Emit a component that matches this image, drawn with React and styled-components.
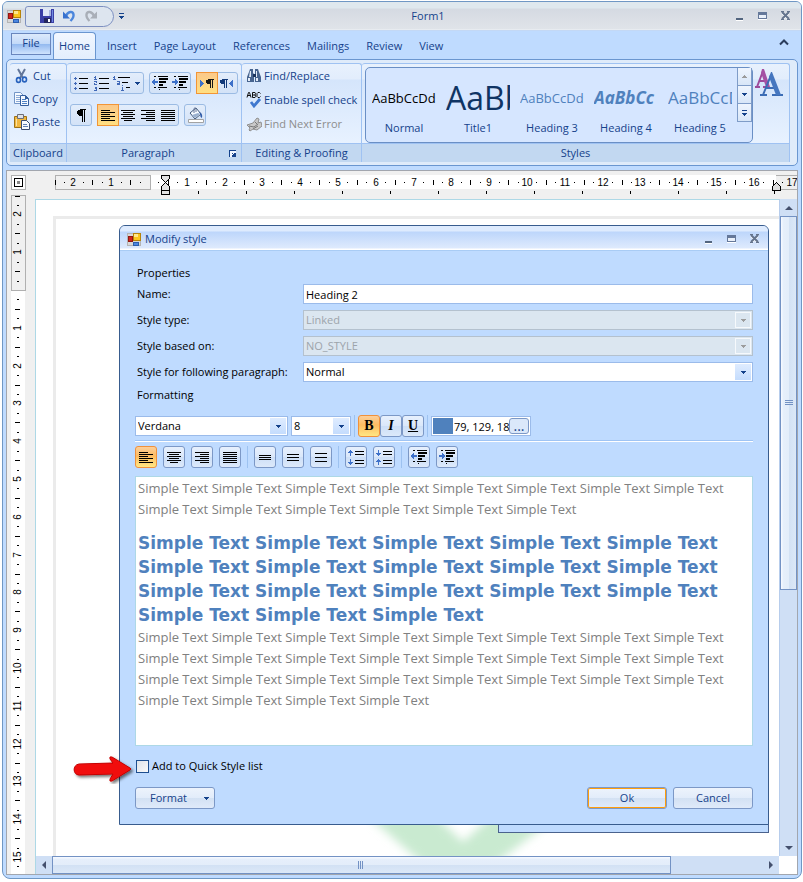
import React from "react";
import styled, { createGlobalStyle, css } from "styled-components";

const Global = createGlobalStyle`
  * { box-sizing: border-box; }
  body { margin: 0; background: #fff; font: 11px/16px "Open Sans", "Noto Sans", sans-serif; color: #000; }
  button, input, select { font: inherit; color: inherit; margin: 0; padding: 0; border: 0; background: none; }
  svg { display: block; flex: none; }
`;

const ink = "#15428b";

/* ---------- window frame ---------- */
const Window = styled.div`
  display: flex;
  flex-direction: column;
  min-height: 878px;
  height: calc(100vh - 4px);
  margin: 1px 1px 3px 2px;
  border: 1px solid #6f97c4;
  border-radius: 6px 6px 8px 8px;
  overflow: hidden;
  background: #bfdbff;
`;
const TitleBar = styled.header`
  display: grid;
  grid-template-columns: auto 1fr auto;
  align-items: center;
  height: 29px;
  padding: 0 7px 0 4px;
  color: ${ink};
  text-align: center;
  background: linear-gradient(#dfe8ee 0, #dfe8ee 6px, #d5dae2 7px, #e0e4e9 27px, #f0f3f7 28px);
  border-bottom: 1px solid #c3d8f5;
`;
const QuickAccess = styled.div`
  display: flex;
  align-items: center;
`;
const QuickPill = styled.div`
  display: flex;
  align-items: center;
  gap: 8px;
  width: 89px;
  height: 21px;
  margin: 0 5px 0 4px;
  padding-left: 14px;
  border: 1px solid #7c8fc0;
  border-radius: 3px 11px 11px 3px;
  background: #dde5ef;
`;
const PlainButton = styled.button`
  display: grid;
  place-items: center;
`;
const WindowButtons = styled.div`
  display: flex;
  justify-content: flex-end;
  align-items: center;
  gap: 7px;
  button { width: 16px; height: 16px; display: grid; place-items: center; }
`;

/* ---------- ribbon ---------- */
const TabRow = styled.nav`
  display: flex;
  height: 28px;
  padding: 1px 6px 0 8px;
  color: ${ink};
`;
const FileTab = styled.button`
  width: 40px;
  height: 22px;
  margin: 1px 2px 0 0;
  padding-bottom: 2px;
  border: 1px solid #6a86bd;
  background: linear-gradient(#dce9fb, #c2d9f8 50%, #93b9ef 51%, #cfe3fd);
`;
const Tab = styled.button`
  height: 27px;
  padding: 0 8px;
  margin-right: -1px;
  border: 1px solid transparent;
  border-bottom: 0;
  border-radius: 4px 4px 0 0;
  ${(p) =>
    p.$active &&
    css`
      width: 43px;
      padding: 0;
      margin-right: 2px;
      border-color: #6a96d0;
      background: linear-gradient(#f2f7ff, #e3eefd);
    `}
`;
const Collapse = styled(PlainButton)`
  width: 16px;
  height: 18px;
  margin: 1px 3px 0 auto;
`;
const Ribbon = styled.section`
  display: grid;
  grid-template-columns: 57px 175px 120px 1fr;
  height: 107px;
  margin: 0 3px;
  padding: 3px 7px 3px 3px;
  border: 1px solid #6a96d0;
  border-radius: 5px;
  background: #dfebfa;
  color: ${ink};
`;
const Group = styled.div`
  display: flex;
  flex-direction: column;
  min-width: 0;
  border: solid #9fc2f2;
  border-width: 1px 1px 0 0;
  border-radius: 3px 3px 0 0;
  background: linear-gradient(#e8f1fd 0, #e2edfc 15px, #d5e5fb 16px, #e8f2ff 80px);
`;
const GroupBody = styled.div`
  flex: 1;
  min-height: 0;
  padding: ${(p) => p.$pad || "4px 3px"};
  display: flex;
  ${(p) => p.$column && "flex-direction: column;"}
  gap: ${(p) => p.$gap || 0}px;
`;
const GroupLabel = styled.div`
  display: flex;
  justify-content: center;
  align-items: center;
  height: 19px;
  padding-right: ${(p) => (p.$launcher ? 5 : 0)}px;
  border-top: 1px solid #9fc2f2;
  background: #c2d8f1;
  white-space: nowrap;
  > span { flex: 1; text-align: center; }
`;
const Command = styled.button`
  display: flex;
  align-items: center;
  gap: ${(p) => p.$gap || 2}px;
  height: ${(p) => p.$h || 23}px;
  white-space: nowrap;
  &:disabled { color: #8d8d8d; }
`;
const Strip = styled.div`
  display: flex;
  height: 22px;
  border: 1px solid #9bbbe3;
  border-radius: 3px;
  background: linear-gradient(#e3edfb, #d3e2f7);
`;
const StripRow = styled.div`
  display: flex;
  gap: 5px;
`;
const StripButton = styled.button`
  display: grid;
  place-items: center;
  width: ${(p) => p.$w || 20}px;
  height: 20px;
  ${(p) =>
    p.$on &&
    css`
      outline: 1px solid #f29536;
      background: linear-gradient(#fbc98a, #ffdf82);
    `}
`;
const Gallery = styled.div`
  display: flex;
  height: 76px;
  flex: 0 0 388px;
  padding-left: 1px;
  border: 1px solid #6a8fc5;
  border-radius: 5px;
  background: #d6e6ff;
`;
const GalleryItem = styled.button`
  display: flex;
  flex-direction: column;
  width: 74px;
  height: 74px;
  align-items: center;
`;
const Sample = styled.span`
  width: 64px;
  height: 52px;
  padding-top: 6px;
  overflow: hidden;
  white-space: nowrap;
  text-align: left;
  line-height: 48px;
  font-size: ${(p) => p.$size}px;
  color: ${(p) => p.$color};
  font-weight: ${(p) => p.$weight || 400};
  font-style: ${(p) => (p.$italic ? "italic" : "normal")};
`;
const Spinner = styled.div`
  display: flex;
  flex-direction: column;
  button {
    display: grid;
    place-items: center;
    width: 15px;
    height: 18px;
    border: 1px solid #7f9cc8;
    border-top: 0;
    background: linear-gradient(#eff5fe, #d8e6f8);
  }
`;

/* ---------- work area ---------- */
const Work = styled.main`
  flex: 1;
  min-height: 0;
  display: grid;
  grid-template-columns: 28px minmax(0, 1fr) 18px;
  grid-template-rows: 28px minmax(0, 1fr) 18px;
  margin: 4px 3px 3px;
  border: 1px solid #a2a6ae;
  background: #f0f0f0;
`;
const HRuler = styled.div`
  grid-column: 2 / 4;
  overflow: hidden;
`;
const LeftRuler = styled.div`
  grid-row: 1 / 4;
  display: flex;
  flex-direction: column;
  gap: 5px;
  min-height: 0;
  overflow: hidden;
  padding: 4px 0 1px 4px;
`;
const Corner = styled.div`
  flex: none;
  display: grid;
  place-items: center;
  width: 15px;
  height: 15px;
  border: 1px solid #b0b0b0;
  background: #fff;
`;
const Doc = styled.div`
  position: relative;
  overflow: hidden;
  background: #fff;
  border: solid #add8e6;
  border-width: 1px 0 0 1px;
`;
const Sheet = styled.div`
  position: absolute;
  inset: 16px 0 0 17px;
  border: solid #ebebeb;
  border-width: 3px 0 0 3px;
  background: #fff;
`;
const Watermark = styled.svg`
  position: absolute;
  left: 330px;
  top: 560px;
`;
const BackWindow = styled.div`
  position: absolute;
  left: 462px;
  right: 10px;
  top: 600px;
  height: 33px;
  border: 1px solid #4a628d;
  background: #bfdbff;
`;
const Pointer = styled.svg`
  position: absolute;
  left: 35px;
  top: 555px;
`;
const VBar = styled.div`
  display: flex;
  flex-direction: column;
  align-items: center;
  background: #cfdff5;
  border-left: 1px solid #b7cdec;
`;
const HBar = styled.div`
  display: flex;
  align-items: center;
  background: #cfdff5;
  border-left: 1px solid #add8e6;
`;
const ScrollArrow = styled.button`
  display: grid;
  place-items: center;
  width: 16px;
  height: 17px;
  flex: none;
`;
const Track = styled.div`
  flex: 1;
  align-self: stretch;
  display: flex;
  flex-direction: ${(p) => (p.$vertical ? "column" : "row")};
`;
const Thumb = styled.div`
  display: grid;
  place-items: center;
  border: 1px solid #7392c4;
  ${(p) =>
    p.$vertical
      ? "height: 60%; background: linear-gradient(90deg, #f4f8ff 1px, #e6effb 2px, #e3edfa 50%, #d2e1f4 51%, #dce8f7);"
      : "width: 87%; background: linear-gradient(#f4f8ff 1px, #e6effb 2px, #e3edfa 50%, #d2e1f4 51%, #dce8f7);"}
`;
const White = styled.div`
  background: #fff;
`;

/* ---------- dialog ---------- */
const Dialog = styled.section`
  position: absolute;
  left: 83px;
  right: 10px;
  top: 25px;
  border: 1px solid #385c8e;
  border-radius: 6px 6px 0 0;
  overflow: hidden;
  background: #bfdbff;
`;
const DialogTitle = styled.header`
  display: flex;
  align-items: center;
  gap: 4px;
  height: 25px;
  padding: 2px 5px 0 7px;
  color: ${ink};
  border-bottom: 1px solid #a9ccf5;
  background: linear-gradient(#deebfe 0, #deebfe 5px, #bdd6fb 6px, #deeafd 22px, #fff 23px);
  > div { margin-left: auto; }
`;
const DialogBody = styled.form`
  display: flex;
  flex-direction: column;
  padding: 14px 15px 15px;
`;
const Heading = styled.div`
  height: 18px;
  padding-left: 2px;
  margin-bottom: ${(p) => p.$after}px;
`;
const Fields = styled.div`
  display: grid;
  grid-template-columns: 168px 1fr;
  row-gap: 6px;
  margin-bottom: 5px;
  label { padding-left: 2px; line-height: 20px; white-space: nowrap; }
`;
const fieldBox = css`
  width: 100%;
  height: 20px;
  padding: 0 2px;
  border: 1px solid #9bbbea;
  border-radius: 0;
  background: #fff;
  outline: 0;
`;
const TextInput = styled.input`
  ${fieldBox}
`;
const SelectWrap = styled.div`
  position: relative;
  width: ${(p) => (p.$w ? p.$w + "px" : "auto")};
  select {
    ${fieldBox}
    appearance: none;
  }
  select:disabled { background: #dbe6f0; border-color: #b4c1ce; color: #9da4ab; opacity: 1; }
`;
const SelectArrow = styled.span`
  position: absolute;
  right: 2px;
  top: 2px;
  display: grid;
  place-items: center;
  width: 16px;
  height: 16px;
  pointer-events: none;
  background: ${(p) => (p.$off ? "#dbe6f0" : "linear-gradient(#dfecff, #c4dcfd)")};
  border: ${(p) => (p.$off ? "1px solid #f6f9fc" : "0")};
`;
const Tools = styled.div`
  display: flex;
  align-items: center;
  gap: ${(p) => p.$gap}px;
  height: 22px;
`;
const Rule = styled.hr`
  align-self: stretch;
  margin: 3px 0 4px;
  border: 0;
  height: 2px;
  background: linear-gradient(#9fc4f4 50%, #fff 50%);
`;
const Divider = styled.i`
  width: 1px;
  height: 22px;
  background: #9dc2f0;
`;
const ToolButton = styled.button`
  display: grid;
  place-items: center;
  width: 22px;
  height: 22px;
  border: 1px solid ${(p) => (p.$on ? "#f0913c" : "#7c98c6")};
  border-radius: 3px;
  background: ${(p) =>
    p.$on ? "linear-gradient(#fccf9a, #fdbc62 45%, #ffe783)" : "linear-gradient(#e7f0fd, #dbe8fa 48%, #cddff7 50%, #dce9fa)"};
`;
const Letter = styled.span`
  font: 700 14px/18px "Liberation Serif", serif;
  font-style: ${(p) => (p.$italic ? "italic" : "normal")};
  text-decoration: ${(p) => (p.$under ? "underline" : "none")};
`;
const Joined = styled.div`
  display: flex;
`;
const ColorField = styled.div`
  display: flex;
  align-items: center;
  width: 100px;
  height: 20px;
  padding: 0 1px;
  border: 1px solid #9bbbea;
  background: #fff;
  input { flex: 1; min-width: 0; height: 18px; padding-left: 1px; outline: 0; }
`;
const Swatch = styled.span`
  flex: none;
  width: 20px;
  height: 16px;
  background: #4f81bd;
`;
const More = styled.button`
  flex: none;
  width: 20px;
  height: 16px;
  line-height: 10px;
  font-size: 14px;
  border: 1px solid #7c98c6;
  border-radius: 3px;
  color: ${ink};
  background: #dbe8fa;
`;
const Preview = styled.div`
  height: 270px;
  margin-top: 8px;
  padding: 1px 2px;
  overflow: hidden;
  border: 1px solid #add8e6;
  background: #fff;
`;
const Para = styled.p`
  margin: 0;
  font: 13px/21px "Open Sans", sans-serif;
  color: #808080;
`;
const BigPara = styled.p`
  margin: 11px 0 0;
  font: 700 17px/24px "DejaVu Sans", sans-serif;
  color: #4f81bd;
`;
const Check = styled.label`
  display: flex;
  align-items: center;
  gap: 3px;
  height: 18px;
  margin: 11px 0 12px 1px;
  input {
    appearance: none;
    width: 13px;
    height: 13px;
    border: 1px solid #1d4e8f;
    background: linear-gradient(135deg, #dfe3ea, #fafafa);
  }
`;
const Footer = styled.div`
  display: flex;
  gap: 6px;
`;
const PushButton = styled.button`
  display: flex;
  align-items: center;
  justify-content: center;
  gap: 17px;
  width: 80px;
  height: 22px;
  margin-right: ${(p) => (p.$left ? "auto" : 0)};
  padding-left: ${(p) => (p.$left ? 9 : 0)}px;
  color: ${ink};
  border: 1px solid #7c98c6;
  border-radius: 3px;
  box-shadow: ${(p) => (p.$default ? "inset 0 0 0 1px #ff9d0a" : "none")};
  background: linear-gradient(#edf3fc, #e2ecfa 50%, #d3e1f3 51%, #dfeafa);
`;

/* ---------- drawings ---------- */
const Svg = ({ w = 16, h = 16, crisp = true, children }) => (
  <svg width={w} height={h} viewBox={`0 0 ${w} ${h}`} fill="none" shapeRendering={crisp ? "crispEdges" : "auto"} aria-hidden="true">
    {children}
  </svg>
);
const AppIcon = () => (
  <Svg w={14} h={14}>
    <path d="M0 1h13v12H0z" fill="#d8d8d8" stroke="#b4b4b4" />
    <path d="M1 4h4v5H1z" fill="#d0241b" stroke="#941510" />
    <path d="M6 1h7v7H6z" fill="#fbc51d" stroke="#b78309" />
    <path d="M7 2h4v3H7z" fill="#ffe88b" />
    <path d="M6 10h5v3H6z" fill="#4a86e0" stroke="#2c5dad" />
  </Svg>
);
const SaveIcon = () => (
  <Svg w={14} h={14}>
    <path d="M0 0h14v14H0z" fill="#3a3fa6" />
    <path d="M3 0h8v7H3z" fill="#dfe7f7" />
    <path d="M9 1h2v6H9z" fill="#a7b6df" />
    <path d="M4 9h7v5H4z" fill="#23265e" />
    <path d="M8 10h2v3H8z" fill="#fff" />
    <path d="M12 1h1v12h-1z" fill="#6f8be0" />
  </Svg>
);
const UndoIcon = ({ redo }) => (
  <Svg w={14} h={14} crisp={false}>
    <g transform={redo ? "translate(14 0) scale(-1 1)" : undefined}>
      <path d="M4 7C6 2 11 2 11.500 5.500c.4 2.500-1 4.500-3 6.500" stroke={redo ? "#a9afb8" : "#4b86dc"} strokeWidth="2.400" />
      <path d="M1 2.500v7h7z" fill={redo ? "#a9afb8" : "#3670ce"} />
    </g>
  </Svg>
);
const Down = ({ color = ink, bar, up }) => (
  <Svg w={5} h={bar ? 6 : 3}>
    {bar && <path d="M0 0h5v1H0z" fill={color} />}
    <path d={up ? "M2 0h1v1h1v1h1v1H0V2h1V1h1z" : bar ? "M0 3h5v1H4v1H3v1H2V5H1V4H0z" : "M0 0h5v1H4v1H3v1H2V2H1V1H0z"} fill={color} />
  </Svg>
);
const ScrollTri = ({ dir }) => (
  <Svg w={8} h={8} crisp={false}>
    <path d={{ up: "M0 6l4-4 4 4z", down: "M0 2h8L4 6z", left: "M6 0v8L2 4z", right: "M2 0l4 4-4 4z" }[dir]} fill="#44506d" />
  </Svg>
);
const MinIcon = () => (
  <Svg w={12} h={12}>
    <path d="M2 8h7v2H2z" fill="#53657f" /><path d="M2 10h7v1H2z" fill="#fff" />
  </Svg>
);
const MaxIcon = () => (
  <Svg w={12} h={12}>
    <path d="M1 2h9v7H1z" fill="#65789a" /><path d="M2 5h7v3H2z" fill="#eaf0fa" /><path d="M1 9h9v1H1z" fill="#fff" />
  </Svg>
);
const CloseIcon = () => (
  <Svg w={12} h={12} crisp={false}>
    <path d="M2 3l7 7M9 3l-7 7" stroke="#fff" strokeWidth="2" /><path d="M2 2l7 7M9 2L2 9" stroke="#65748d" strokeWidth="2" />
    <path d="M1 1.500h3M7 1.500h3M1 9.500h3M7 9.500h3" stroke="#65748d" />
  </Svg>
);
const Lines = ({ rows, w = 14, step = 2 }) => (
  <Svg w={w} h={(rows.length - 1) * step + 1}>
    {rows.map(([x, len], i) => <path key={i} d={`M${x} ${i * step}h${len}v1h-${len}z`} fill="#000" />)}
  </Svg>
);
const ALIGN = {
  left: [[0, 9], [0, 14], [0, 9], [0, 14], [0, 9], [0, 14]],
  center: [[0, 14], [2, 10], [0, 14], [2, 10], [0, 14], [3, 8]],
  right: [[0, 14], [5, 9], [0, 14], [5, 9], [0, 14], [5, 9]],
  full: [[0, 14], [0, 14], [0, 14], [0, 14], [0, 14], [0, 14]],
};
const BulletIcon = () => (
  <Svg w={14} h={13}>
    {[0, 5, 10].map((y) => (
      <g key={y}><path d={`M0 ${y + 1}h3v1H0zM1 ${y}h1v3H1z`} fill="#4169b8" /><path d={`M5 ${y + 1}h9v1H5z`} fill="#000" /></g>
    ))}
  </Svg>
);
const NumberIcon = () => (
  <Svg w={15} h={15}>
    <path d="M1 0h1v4H1zM0 3h3v1H0zM0 1h1v1H0zM0 5h3v2H1v1h2v1H0V7h2V6H0zM0 11h3v4H0v-1h2v-1H1v-1h1z" fill="#4169b8" />
    <path d="M5 2h10v1H5zM5 7h10v1H5zM5 12h10v1H5z" fill="#000" />
  </Svg>
);
const MultiIcon = () => (
  <Svg w={17} h={15}>
    <path d="M1 0h1v4H1zM0 3h3v1H0zM0 1h1v1H0zM4 5h3v4H4V7h2V6H4zM9 9h1v1H9zM9 11h1v4H9zM8 14h3v1H8z" fill="#4169b8" />
    <path d="M5 1h12v1H5zM9 6h6v1H9zM13 11h4v1h-4z" fill="#000" />
  </Svg>
);
const IndentIcon = ({ more }) => (
  <Svg w={16} h={14}>
    <path d="M2 0h2v1H2zM6 0h10v1H6zM7 2h9v2H7zM7 5h7v2H7zM7 8h4v2H7zM2 11h2v1H2zM6 11h9v1H6zM7 13h1v1H7z" fill="#000" />
    <path d={more ? "M0 5h3V3h1v1h1v1h1v2H5v1H4v1H3V7H0z" : "M6 5H3V3H2v1H1v1H0v2h1v1h1v1h1V7h3z"} fill="#3d70c9" />
  </Svg>
);
const Pilcrow = () => (
  <Svg w={9} h={13}>
    <path d="M3 0h6v1H8v12H7V1H6v12H5V7H2V6H1V5H0V2h1V1h2z" fill="#000" />
  </Svg>
);
const DirIcon = ({ rtl }) => (
  <Svg w={14} h={9}>
    <path d={rtl ? "M13 1v7h-1V7h-1V6h-1V5H9V4h1V3h1V2h1V1z" : "M0 1v7h1V7h1V6h1V5h1V4H3V3H2V2H1V1z"} fill="#3d70c9" />
    <path transform={rtl ? undefined : "translate(6 0)"} d="M2 0h6v1H7v8H6V1H5v8H4V5H1V4H0V1h2z" fill={rtl ? "#123a7a" : "#161616"} />
  </Svg>
);
const BucketIcon = () => (
  <Svg w={17} h={17} crisp={false}>
    <path d="M3 6l6-5 5 6-6 5z" fill="#f7fbff" stroke="#405878" /><path d="M7 6V1.500Q8 0 9 1.500V5" stroke="#66779a" />
    <path d="M12 5q4 1 3 6-2-1-2-4z" fill="#315ca8" /><path d="M5 8l6-2 2 1-5 4z" fill="#9bb1cf" />
    <path d="M1.500 12.500h15v3h-15z" fill="#fff" stroke="#a3a3a3" />
  </Svg>
);
const CutIcon = () => (
  <Svg crisp={false}>
    <path d="M4 1l5 9M11 1L6 10" stroke="#63779a" strokeWidth="2" /><ellipse cx="4.500" cy="12" rx="2" ry="2.400" stroke="#2862bd" strokeWidth="1.600" /><ellipse cx="10.500" cy="11.500" rx="2" ry="2.400" stroke="#2862bd" strokeWidth="1.600" />
  </Svg>
);
const CopyIcon = () => (
  <Svg crisp={false}>
    <path d="M.5 1.500h6l3 3v8h-9z" fill="#f5f9ff" stroke="#7295c7" /><path d="M2 4.500h4M2 6.500h4M2 8.500h4M2 10.500h4" stroke="#8ba9d5" />
    <path d="M6.500 4.500h5l3 3v7h-8z" fill="#f5f9ff" stroke="#355f9e" /><path d="M8 8.500h4M8 10.500h5M8 12.500h5" stroke="#4d80c4" />
    <path d="M11 4v4h4z" fill="#355f9e" />
  </Svg>
);
const PasteIcon = () => (
  <Svg crisp={false}>
    <path d="M.5 2.500h12v11H.5z" fill="#f1b73f" stroke="#9c7117" /><path d="M3.500.5h6v4h-6z" fill="#dfe2e8" stroke="#6c6f78" />
    <path d="M2.500 5v7" stroke="#fbe3a0" /><path d="M7.500 6.500h5l3 3v6h-8z" fill="#f7fbff" stroke="#3b4d70" /><path d="M9 10.500h4M9 12.500h5" stroke="#6280b0" />
  </Svg>
);
const FindIcon = () => (
  <Svg crisp={false}>
    <path d="M4 1h3v4l1 1v8H1V9l2-5zM9 1h3l1 3 2 5v5H9z" fill="#47648f" /><path d="M4 3h1v6H3zM10 3h1v6h-1zM2 10h2v3H2zM10 10h2v3h-2z" fill="#e5edf8" /><path d="M7 6h3v3H7z" fill="#1b345c" />
  </Svg>
);
const SpellIcon = () => (
  <Svg crisp={false}>
    <path d="M1 5.500l1.500-5h1l1.500 5M1.500 3.500h3M6.500.5v5h2.500l.8-1.200-.8-1.300h-2M6.500.5H9l.5 1-.5 1.500M14.500 1.500l-1-1h-1.500l-1 1v3l1 1h1.500l1-1" stroke="#111" />
    <path d="M5 10l3 4 6-7" stroke="#3f78cf" strokeWidth="2.800" />
  </Svg>
);
const NextErrorIcon = () => (
  <Svg crisp={false}>
    <path d="M1 9l6-2 4-5 2 1-1 4 3-1 1 4-5 4-4-1-3 2-1-1 1-2z" fill="#c9c9c9" stroke="#8f8f8f" /><path d="M3 10l5 1 4-3M7 13l5-3M9 6l2 2" stroke="#777" />
  </Svg>
);
const ChangeStyles = () => (
  <Svg w={30} h={30} crisp={false}>
    <path d="M1 20h5M9 20h5M3 20L9 4M5 14h7" stroke="#9c4a9b" strokeWidth="2" />
    <path d="M8 2h2l6 18h-4L7 6z" fill="#a552a4" />
    <path d="M6 28h7M18 28h11M9 28L17 8M12 21h10" stroke="#3b6cb5" strokeWidth="2" />
    <path d="M17 5h1l9 23h-5L15 10z" fill="#4576bf" />
  </Svg>
);
const SpacingIcon = ({ inward }) => (
  <Svg w={16} h={15}>
    <path d="M7 1h9v1H7zM7 4h9v1H7zM7 10h9v1H7zM7 13h9v1H7z" fill="#000" />
    <path d={inward ? "M2 0h1v3h2v1H4v1H3v1H2V5H1V4H0V3h2zM2 9h1v1h1v1h1v1H3v3H2v-3H0v-1h1v-1h1z" : "M2 0h1v1h1v1h1v1H3v3H2V3H0V2h1V1h1zM2 9h1v3h2v1H4v1H3v1H2v-1H1v-1H0v-1h2z"} fill="#3d70c9" />
  </Svg>
);
const LauncherIcon = () => (
  <Svg w={7} h={7}>
    <path d="M0 0h7v1H1v6H0z" fill={ink} /><path d="M1 1h6v6H1z" fill="#f2f7ff" /><path d="M3 3h1v1h1V3h1v3H3V5h1V4H3zM6 3h1v4H3V6h3z" fill={ink} />
  </Svg>
);

/* Rulers count centimetres from the margin, one unit every 37.8 px. */
const UNIT = 37.8;
function marks(origin, from, to) {
  const out = [];
  for (let q = from * 4; q <= to * 4; q++) {
    if (q === 0) continue;
    out.push({ p: Math.round(origin + (q * UNIT) / 4), n: q % 4 === 0 ? Math.abs(q / 4) : null, half: q % 2 === 0 });
  }
  return out;
}
const HorizontalScale = () => (
  <svg width="768" height="28" shapeRendering="crispEdges" fontFamily="Liberation Sans, sans-serif" fontSize="10">
    <path d="M20 4h748v14H20z" fill="#fff" />
    <path d="M20.500 4.500h95v14h-95zM741 4.500h30v14h-30" fill="#f0f0f0" stroke="#b0b0b0" />
    {marks(114, -2.5, 17).map(({ p, n, half }) =>
      n ? <text key={p} x={p} y="15" textAnchor="middle">{n}</text>
        : <path key={p} d={half ? `M${p} 9h1v5h-1z` : `M${p} 11h1v1h-1z`} />
    )}
    {Array.from({ length: 13 }, (_, i) => <path key={i} d={`M${163 + i * 48} 20h1v3h-1z`} />)}
    <path d="M126.500 4.500h8v3l-4 4 4 4v8h-8v-8l4-4-4-4z" fill="#e3e3e3" stroke="#000" />
    <path d="M127 19.500h7" stroke="#000" />
    <path d="M737.500 19.500v-4l4-4 4 4v4z" fill="#ddd" stroke="#000" />
  </svg>
);
const VerticalScale = () => (
  <svg width="15" height="700" shapeRendering="crispEdges" fontFamily="Liberation Sans, sans-serif" fontSize="10">
    <path d="M0 0h14v700H0z" fill="#fff" />
    <path d="M.5.500h14v95H.5z" fill="#f0f0f0" stroke="#b0b0b0" />
    {marks(95, -2.5, 15.25).map(({ p, n, half }) =>
      n ? <text key={p} transform={`translate(10 ${p}) rotate(-90)`} textAnchor="middle">{n}</text>
        : <path key={p} d={half ? `M4 ${p}h5v1H4z` : `M6 ${p}h2v1H6z`} />
    )}
  </svg>
);

/* ---------- pieces ---------- */
const Caption = () => (
  <WindowButtons>
    <button type="button" aria-label="Minimize"><MinIcon /></button>
    <button type="button" aria-label="Maximize"><MaxIcon /></button>
    <button type="button" aria-label="Close"><CloseIcon /></button>
  </WindowButtons>
);
const Select = ({ id, value, disabled, w, label }) => (
  <SelectWrap $w={w}>
    <select id={id} disabled={disabled} aria-label={label}><option>{value}</option></select>
    <SelectArrow $off={disabled}><Down color={disabled ? "#9c9c9c" : ink} /></SelectArrow>
  </SelectWrap>
);
const repeat = (n) => Array(n).fill("Simple Text").join(" ");
const STYLES = [
  { name: "Normal", text: "AaBbCcDd", size: 13, color: "#000" },
  { name: "Title1", text: "AaBb", size: 32, color: "#0f3464" },
  { name: "Heading 3", text: "AaBbCcDd", size: 13, color: "#4f81bd" },
  { name: "Heading 4", text: "AaBbCc", size: 17, color: "#4f81bd", weight: 700, italic: true },
  { name: "Heading 5", text: "AaBbCcD", size: 17, color: "#4f81bd" },
];

export default function App() {
  return (
    <>
      <Global />
      <Window>
        <TitleBar>
          <QuickAccess>
            <AppIcon />
            <QuickPill>
              <PlainButton aria-label="Save"><SaveIcon /></PlainButton>
              <PlainButton aria-label="Undo"><UndoIcon /></PlainButton>
              <PlainButton aria-label="Redo"><UndoIcon redo /></PlainButton>
            </QuickPill>
            <PlainButton aria-label="Customize"><Down bar /></PlainButton>
          </QuickAccess>
          <span>Form1</span>
          <Caption />
        </TitleBar>

        <TabRow>
          <FileTab>File</FileTab>
          <Tab $active>Home</Tab>
          {["Insert", "Page Layout", "References", "Mailings", "Review", "View"].map((t) => <Tab key={t}>{t}</Tab>)}
          <Collapse aria-label="Collapse ribbon">
            <Svg w={10} h={7} crisp={false}><path d="M1 5.500l4-4 4 4" stroke="#2b3d5c" strokeWidth="2" /></Svg>
          </Collapse>
        </TabRow>

        <Ribbon>
          <Group>
            <GroupBody $column $pad="0 4px">
              <Command $gap={3}><CutIcon />Cut</Command>
              <Command><CopyIcon />Copy</Command>
              <Command><PasteIcon />Paste</Command>
            </GroupBody>
            <GroupLabel>Clipboard</GroupLabel>
          </Group>
          <Group>
            <GroupBody $column $pad="8px 3px 0" $gap={10}>
              <StripRow>
                <Strip>
                  <StripButton aria-label="Bullets"><BulletIcon /></StripButton>
                  <StripButton aria-label="Numbering"><NumberIcon /></StripButton>
                  <StripButton aria-label="Multilevel list"><MultiIcon /></StripButton>
                  <StripButton $w={12} aria-label="List options"><Down /></StripButton>
                </Strip>
                <Strip>
                  <StripButton aria-label="Decrease indent"><IndentIcon /></StripButton>
                  <StripButton aria-label="Increase indent"><IndentIcon more /></StripButton>
                </Strip>
                <Strip>
                  <StripButton $on aria-label="Left to right"><DirIcon /></StripButton>
                  <StripButton aria-label="Right to left"><DirIcon rtl /></StripButton>
                </Strip>
              </StripRow>
              <StripRow>
                <Strip><StripButton aria-label="Show marks"><Pilcrow /></StripButton></Strip>
                <Strip>
                  {Object.keys(ALIGN).map((k) => (
                    <StripButton key={k} $on={k === "left"} aria-label={`Align ${k}`}><Lines rows={ALIGN[k]} /></StripButton>
                  ))}
                </Strip>
                <Strip><StripButton aria-label="Shading"><BucketIcon /></StripButton></Strip>
              </StripRow>
            </GroupBody>
            <GroupLabel $launcher><span>Paragraph</span><PlainButton aria-label="Paragraph settings"><LauncherIcon /></PlainButton></GroupLabel>
          </Group>
          <Group>
            <GroupBody $column $pad="0 4px">
              <Command $h={24}><FindIcon />Find/Replace</Command>
              <Command $h={24}><SpellIcon />Enable spell check</Command>
              <Command $h={24} disabled><NextErrorIcon />Find Next Error</Command>
            </GroupBody>
            <GroupLabel>Editing &amp; Proofing</GroupLabel>
          </Group>
          <Group>
            <GroupBody $pad="3px 3px 0" $gap={1}>
              <Gallery>
                {STYLES.map((s) => (
                  <GalleryItem key={s.name}>
                    <Sample $size={s.size} $color={s.color} $weight={s.weight} $italic={s.italic}>{s.text}</Sample>
                    {s.name}
                  </GalleryItem>
                ))}
                <Spinner>
                  <button aria-label="Scroll up"><Down up color="#9c9c9c" /></button>
                  <button aria-label="Scroll down"><Down /></button>
                  <button aria-label="More styles"><Down bar /></button>
                </Spinner>
              </Gallery>
              <Command aria-label="Change styles" $h={30}><ChangeStyles /></Command>
            </GroupBody>
            <GroupLabel>Styles</GroupLabel>
          </Group>
        </Ribbon>

        <Work>
          <LeftRuler>
            <Corner>
              <Svg w={9} h={9}><path d="M0 0h9v9H0z" fill="#000" /><path d="M1 1h7v7H1z" fill="#fff" /><path d="M3 3h3v3H3z" fill="#888" /></Svg>
            </Corner>
            <VerticalScale />
          </LeftRuler>
          <HRuler><HorizontalScale /></HRuler>
          <Doc>
            <Sheet />
            <Watermark width="240" height="120" viewBox="0 0 240 120">
              <defs><filter id="soft" x="-20%" y="-20%" width="140%" height="140%"><feGaussianBlur stdDeviation="5" /></filter></defs>
              <path d="M-28 30L87 130h8L225 30h-70L97 82 42 30z" fill="#c9ead0" filter="url(#soft)" />
            </Watermark>
            <BackWindow />
            <Dialog role="dialog" aria-label="Modify style">
              <DialogTitle><AppIcon />Modify style<Caption /></DialogTitle>
              <DialogBody onSubmit={(e) => e.preventDefault()}>
                <Heading $after={1}>Properties</Heading>
                <Fields>
                  <label htmlFor="name">Name:</label>
                  <TextInput id="name" defaultValue="Heading 2" />
                  <label htmlFor="type">Style type:</label>
                  <Select id="type" value="Linked" disabled />
                  <label htmlFor="base">Style based on:</label>
                  <Select id="base" value="NO_STYLE" disabled />
                  <label htmlFor="next">Style for following paragraph:</label>
                  <Select id="next" value="Normal" />
                </Fields>
                <Heading $after={10}>Formatting</Heading>
                <Tools $gap={3}>
                  <Select w={153} value="Verdana" label="Font" />
                  <Select w={60} value="8" label="Size" />
                  <Divider />
                  <Joined>
                    <ToolButton type="button" $on><Letter>B</Letter></ToolButton>
                    <ToolButton type="button"><Letter $italic>I</Letter></ToolButton>
                    <ToolButton type="button"><Letter $under>U</Letter></ToolButton>
                  </Joined>
                  <Divider />
                  <ColorField>
                    <Swatch /><input aria-label="Color" defaultValue="79, 129, 18" /><More type="button">...</More>
                  </ColorField>
                </Tools>
                <Rule />
                <Tools $gap={6}>
                  {Object.keys(ALIGN).map((k) => (
                    <ToolButton type="button" key={k} $on={k === "left"} aria-label={`Align ${k}`}><Lines rows={ALIGN[k]} /></ToolButton>
                  ))}
                  <Divider />
                  {[2, 3, 4].map((s) => (
                    <ToolButton type="button" key={s} aria-label={`Line spacing ${s}`}><Lines w={12} step={s} rows={[[0, 12], [0, 12], [0, 12]]} /></ToolButton>
                  ))}
                  <Divider />
                  <ToolButton type="button" aria-label="Increase spacing"><SpacingIcon /></ToolButton>
                  <ToolButton type="button" aria-label="Decrease spacing"><SpacingIcon inward /></ToolButton>
                  <Divider />
                  <ToolButton type="button" aria-label="Decrease indent"><IndentIcon /></ToolButton>
                  <ToolButton type="button" aria-label="Increase indent"><IndentIcon more /></ToolButton>
                </Tools>
                <Preview>
                  <Para>{repeat(14)}</Para>
                  <BigPara>{repeat(18)}</BigPara>
                  <Para>{repeat(28)}</Para>
                </Preview>
                <Check><input type="checkbox" />Add to Quick Style list</Check>
                <Footer>
                  <PushButton type="button" $left>Format<Down /></PushButton>
                  <PushButton $default>Ok</PushButton>
                  <PushButton type="button">Cancel</PushButton>
                </Footer>
              </DialogBody>
            </Dialog>
            <Pointer width="64" height="32" viewBox="0 0 64 32">
              <defs><filter id="drop"><feDropShadow dx="2" dy="2" stdDeviation="1.500" floodOpacity=".55" /></filter></defs>
              <path d="M8 9l34-1-3-4q-1-3 2-2l18 11q2 1 0 2L41 26q-3 1-2-2l3-5-34 1C2 20 1 10 8 9z" fill="#f10f0f" stroke="#c40000" filter="url(#drop)" />
            </Pointer>
          </Doc>
          <VBar>
            <ScrollArrow aria-label="Scroll up"><ScrollTri dir="up" /></ScrollArrow>
            <Track $vertical>
              <Thumb $vertical><Svg w={8} h={6}><path d="M0 0h8v1H0zM0 2h8v1H0zM0 4h8v1H0z" fill="#7392c4" /></Svg></Thumb>
            </Track>
            <ScrollArrow aria-label="Scroll down"><ScrollTri dir="down" /></ScrollArrow>
          </VBar>
          <HBar>
            <ScrollArrow aria-label="Scroll left"><ScrollTri dir="left" /></ScrollArrow>
            <Track>
              <Thumb><Svg w={6} h={8}><path d="M0 0h1v8H0zM2 0h1v8H2zM4 0h1v8H4z" fill="#7392c4" /></Svg></Thumb>
            </Track>
            <ScrollArrow aria-label="Scroll right"><ScrollTri dir="right" /></ScrollArrow>
          </HBar>
          <White />
        </Work>
      </Window>
    </>
  );
}
